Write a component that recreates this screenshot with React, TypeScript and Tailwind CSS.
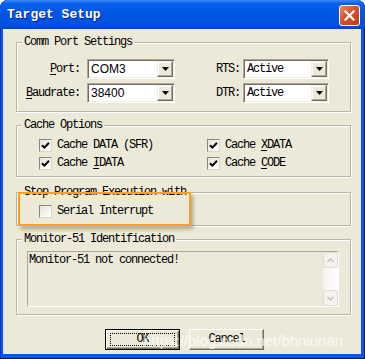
import React from "react";

const mono = "[font-family:'Liberation_Mono','Courier_New',monospace] text-[12px] tracking-[-1.2px]";
const sans = "[font-family:'Liberation_Sans',Arial,sans-serif] text-[12px] tracking-[0px]";

function U({ children }: { children: string }) {
  return <span className="underline underline-offset-[2px]">{children}</span>;
}

function Group({
  title,
  className,
  children,
}: {
  title: string;
  className: string;
  children?: React.ReactNode;
}) {
  return (
    <div
      className={`relative border border-[#B9B6A5] shadow-[1px_1px_0_#fff,inset_1px_1px_0_#fff] ${className}`}
    >
      <span className="absolute left-[5px] top-[-8px] bg-[#ECE9D8] px-[2px] leading-[14px] text-black">
        {title}
      </span>
      {children}
    </div>
  );
}

function Combo({ value, width, font }: { value: string; width: string; font: string }) {
  return (
    <div
      className={`flex h-[20px] ${width} border border-[#ACA899] border-b-white border-r-white bg-white shadow-[inset_1px_1px_0_#716F64,inset_-1px_-1px_0_#F1EFE2]`}
    >
      <span className={`flex-1 pl-[3px] leading-[18px] text-black ${font}`}>{value}</span>
      <span className="mr-[1px] mt-[1px] flex h-[16px] w-[16px] items-center justify-center border border-[#F1EFE2] border-b-[#716F64] border-r-[#716F64] bg-[#ECE9D8] shadow-[inset_-1px_-1px_0_#ACA899,inset_1px_1px_0_#fff]">
        <svg width="7" height="4" viewBox="0 0 7 4">
          <path d="M0 0H7L3.5 4Z" fill="#000" />
        </svg>
      </span>
    </div>
  );
}

function Check({ checked, label }: { checked?: boolean; label: React.ReactNode }) {
  return (
    <div className="flex h-[13px] items-center gap-[5px]">
      <span className="flex h-[13px] w-[13px] items-center justify-center border border-[#8A897F] border-b-[#D8D6CC] border-r-[#D8D6CC] bg-[linear-gradient(135deg,#E6E4DC,#FFFFFF)]">
        {checked && (
          <svg width="9" height="9" viewBox="0 0 9 9">
            <path d="M1 4.2L3.4 6.6L8 1.8" stroke="#000" strokeWidth="2" fill="none" />
          </svg>
        )}
      </span>
      <span className="leading-[13px] text-black">{label}</span>
    </div>
  );
}

export default function App() {
  return (
    <div className="h-[359px] w-[365px] overflow-hidden rounded-t-[8px] bg-[#0556EA] shadow-[inset_0_-1px_0_#00138C,inset_1px_0_0_#0831D9,inset_-1px_0_0_#00138C]">
      {/* title bar */}
      <div className="flex h-[29px] items-center justify-between rounded-t-[8px] bg-[linear-gradient(to_bottom,#3D8DF5_0%,#0B61EB_12%,#0057E6_45%,#0052DE_85%,#0044C6_100%)] pl-[7px] pr-[5px]">
        <span className="[font-family:'Liberation_Mono',monospace] text-[13px] font-bold text-white [text-shadow:1px_1px_0_#0A1E7A]">
          Target Setup
        </span>
        <button className="mt-[1px] flex h-[21px] w-[21px] items-center justify-center rounded-[3px] border border-white bg-[linear-gradient(135deg,#EE8A6A_0%,#D9502A_45%,#C23A12_100%)]">
          <svg width="11" height="11" viewBox="0 0 11 11">
            <path d="M1.5 1.5L9.5 9.5M9.5 1.5L1.5 9.5" stroke="#fff" strokeWidth="2.2" strokeLinecap="square" />
          </svg>
        </button>
      </div>

      {/* body */}
      <div className={`relative ml-[3px] mr-[4px] flex h-[325px] flex-col bg-[#ECE9D8] pl-[13px] pr-[10px] pt-[13px] ${mono}`}>
        <Group title="Comm Port Settings" className="h-[70px]">
          <div className="flex flex-col gap-[4px] pt-[16px]">
            <div className="flex items-center">
              <span className="w-[63px] text-right">
                <U>P</U>ort:
              </span>
              <span className="ml-[7px]">
                <Combo value="COM3" width="w-[88px]" font={sans} />
              </span>
              <span className="w-[65px] text-right">RTS:</span>
              <span className="ml-[3px]">
                <Combo value="Active" width="w-[86px]" font={mono} />
              </span>
            </div>
            <div className="flex items-center">
              <span className="w-[63px] text-right">
                <U>B</U>audrate:
              </span>
              <span className="ml-[7px]">
                <Combo value="38400" width="w-[88px]" font={sans} />
              </span>
              <span className="w-[65px] text-right">DTR:</span>
              <span className="ml-[3px]">
                <Combo value="Active" width="w-[86px]" font={mono} />
              </span>
            </div>
          </div>
        </Group>

        <Group title="Cache Options" className="mt-[13px] h-[52px]">
          <div className="grid grid-cols-[168px_1fr] gap-y-[5px] pl-[22px] pt-[13px]">
            <Check checked label="Cache DATA (SFR)" />
            <Check checked label={<>Cache <U>X</U>DATA</>} />
            <Check checked label={<>Cache <U>I</U>DATA</>} />
            <Check checked label={<>Cache <U>C</U>ODE</>} />
          </div>
        </Group>

        <Group title="Stop Program Execution with" className="mt-[15px] h-[34px]">
          <div className="pl-[22px] pt-[12px]">
            <Check label="Serial Interrupt" />
          </div>
          {/* orange highlight */}
          <div className="absolute left-[1px] top-[-1px] h-[34px] w-[173px] border-2 border-[#F7A11C] shadow-[2px_3px_4px_rgba(0,0,0,0.3)]" />
        </Group>

        <Group title="Monitor-51 Identification" className="mt-[13px] h-[76px]">
          <div className="ml-[10px] mt-[11px] flex h-[56px] w-[312px] border border-[#ACA899] border-b-white border-r-white bg-[#ECE9D8]">
            <span className="flex-1 pl-[1px] pt-[2px] leading-[13px] text-black">Monitor-51 not connected!</span>
            <div className="flex w-[15px] flex-col justify-between bg-[linear-gradient(to_right,#F4F3EE,#FFFFFF)]">
              <span className="flex h-[16px] items-center justify-center rounded-[2px] border border-[#E0DED3] bg-[#F3F2EC]">
                <svg width="7" height="5" viewBox="0 0 7 5">
                  <path d="M0.5 4L3.5 1L6.5 4" stroke="#C3C1B6" strokeWidth="1.4" fill="none" />
                </svg>
              </span>
              <span className="flex h-[16px] items-center justify-center rounded-[2px] border border-[#E0DED3] bg-[#F3F2EC]">
                <svg width="7" height="5" viewBox="0 0 7 5">
                  <path d="M0.5 1L3.5 4L6.5 1" stroke="#C3C1B6" strokeWidth="1.4" fill="none" />
                </svg>
              </span>
            </div>
          </div>
        </Group>

        <div className="mt-[14px] flex justify-center gap-[9px] pl-[2px]">
          <button className="flex h-[21px] w-[75px] items-center justify-center border border-black bg-[#ECE9D8] shadow-[inset_1px_1px_0_#fff,inset_-1px_-1px_0_#716F64,inset_-2px_-2px_0_#ACA899]">
            <span className="flex h-[13px] w-[65px] items-center justify-center border border-dotted border-black leading-[11px] text-black">
              OK
            </span>
          </button>
          <button className="flex h-[21px] w-[75px] items-center justify-center border border-white border-b-[#716F64] border-r-[#716F64] bg-[#ECE9D8] shadow-[inset_-1px_-1px_0_#ACA899] leading-[11px] text-black">
            Cancel
          </button>
        </div>

        {/* watermark */}
        <span className="pointer-events-none absolute left-[140px] top-[301px] [font-family:'Liberation_Sans',Arial,sans-serif] text-[15px] tracking-[0px] text-white/75">
          https://blog.csdn.net/bhniunan
        </span>
      </div>
    </div>
  );
}
